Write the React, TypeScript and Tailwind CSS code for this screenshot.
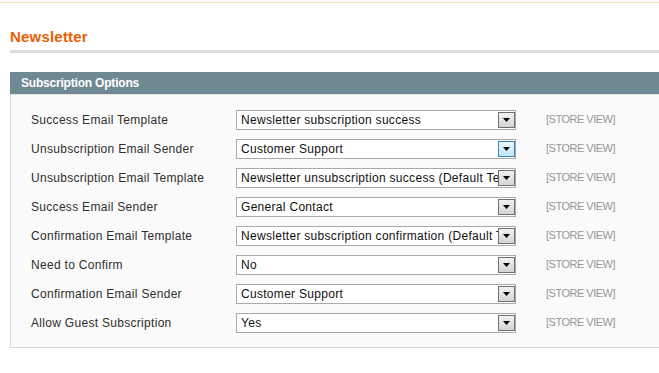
const rows = [
  { label: 'Success Email Template', value: 'Newsletter subscription success' },
  { label: 'Unsubscription Email Sender', value: 'Customer Support', active: true },
  { label: 'Unsubscription Email Template', value: 'Newsletter unsubscription success (Default Template from Locale)' },
  { label: 'Success Email Sender', value: 'General Contact' },
  { label: 'Confirmation Email Template', value: 'Newsletter subscription confirmation (Default Template from Locale)' },
  { label: 'Need to Confirm', value: 'No' },
  { label: 'Confirmation Email Sender', value: 'Customer Support' },
  { label: 'Allow Guest Subscription', value: 'Yes' },
]

function FakeSelect({ value, active }: { value: string; active?: boolean }) {
  return (
    <div className="flex items-center w-[280px] h-[20px] bg-white border border-[#a9a9a9]">
      <span className="flex-1 overflow-hidden whitespace-nowrap pl-[4px] text-[12px] leading-[18px] tracking-[0.3px] text-[#111]">
        {value}
      </span>
      <span
        className={
          active
            ? 'flex shrink-0 items-center justify-center w-[17px] h-[16px] border border-[#3c7fb1] bg-gradient-to-b from-[#eaf6fd] to-[#bee6fd]'
            : 'flex shrink-0 items-center justify-center w-[17px] h-[16px] border border-[#707070] bg-gradient-to-b from-[#f2f2f2] to-[#d4d4d4]'
        }
      >
        <svg width="7" height="4" viewBox="0 0 7 4">
          <path d="M0 0h7L3.5 4z" fill="#000" />
        </svg>
      </span>
    </div>
  )
}

export default function App() {
  return (
    <div className="min-h-[373px] bg-white font-['Liberation_Sans',Arial,sans-serif]">
      <div className="h-[3px] border-b border-[#f6e3b5]" />

      <div className="pl-[10px]">
        {/* Page title */}
        <h3 className="mt-[24px] h-[20px] leading-[20px] text-[15px] font-bold tracking-[0.2px] text-[#eb5e00]">Newsletter</h3>
        <div className="mt-[3px] h-[3px] bg-[#dcdcdc]" />

        {/* Fieldset */}
        <div className="mt-[19px]">
          <div className="h-[22px] leading-[22px] pl-[11px] bg-[#6f8992] text-white text-[12px] font-bold tracking-[-0.2px]">
            Subscription Options
          </div>
          <div className="bg-[#fafafa] border-l border-t border-b border-t-[#e4e4e4] border-l-[#d6d6d6] border-b-[#d6d6d6] pt-[10px] pb-[10px]">
            {rows.map(row => (
              <div key={row.label} className="flex items-center h-[29px]">
                <div className="w-[225px] shrink-0 pl-[20px] text-[12px] tracking-[0.3px] text-[#2f2f2f]">{row.label}</div>
                <FakeSelect value={row.value} active={row.active} />
                <div className="ml-[30px] text-[11px] tracking-[-0.5px] text-[#979797]">[STORE VIEW]</div>
              </div>
            ))}
          </div>
        </div>
      </div>
    </div>
  )
}
